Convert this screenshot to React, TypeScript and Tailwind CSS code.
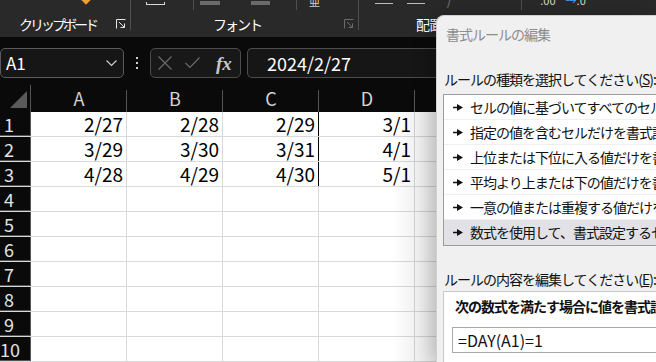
import type { ReactNode } from "react";

const jp = "font-['Noto_Sans_CJK_JP','Noto_Sans',sans-serif]";

const columns = ["A", "B", "C", "D"];

const rows: string[][] = [
  ["2/27", "2/28", "2/29", "3/1"],
  ["3/29", "3/30", "3/31", "4/1"],
  ["4/28", "4/29", "4/30", "5/1"],
];

const ruleTypes = [
  "セルの値に基づいてすべてのセルを書式設定",
  "指定の値を含むセルだけを書式設定",
  "上位または下位に入る値だけを書式設定",
  "平均より上または下の値だけを書式設定",
  "一意の値または重複する値だけを書式設定",
  "数式を使用して、書式設定するセルを決定",
];

function Launcher({ dim = false }: { dim?: boolean }) {
  return (
    <svg
      width="10"
      height="10"
      viewBox="0 0 10 10"
      className={dim ? "text-[#6a6a6a]" : "text-[#e6e6e6]"}
    >
      <path
        d="M0.5 9.5V0.5H9.5M3 3l5.5 5.5M4.5 8.5h4v-4"
        fill="none"
        stroke="currentColor"
        strokeWidth="1"
      />
    </svg>
  );
}

function Separator({ tall = false }: { tall?: boolean }) {
  return <div className={`w-px bg-[#4f4f4f] ${tall ? "h-[30px]" : "h-[10px]"}`} />;
}

function Ribbon() {
  return (
    <div className={`flex h-[37px] shrink-0 bg-[#292929] text-white ${jp}`}>
      {/* clipboard */}
      <div className="flex w-[130px] flex-col">
        <div className="flex h-[13px] items-start pl-[82px]">
          <div className="-mt-[5px] size-[8px] rotate-45 bg-[#f0a030]" />
        </div>
        <div className="flex h-[22px] items-center pl-[19px] pr-[4px]">
          <span className="text-[14px] tracking-[-3px]">クリップボード</span>
          <div className="ml-auto">
            <Launcher />
          </div>
        </div>
      </div>
      <Separator tall />

      {/* font */}
      <div className="flex w-[227px] flex-col">
        <div className="flex h-[13px] items-start">
          <div className="ml-[15px] mt-[2px] flex h-[3px] w-[19px] items-end border-x border-b border-[#d8d8d8]" />
          <div className="ml-[28px]">
            <Separator />
          </div>
          <div className="ml-[6px] mt-[1px] h-[4px] w-[20px] bg-[#6a6a6a]" />
          <div className="ml-[31px] mt-[1px] h-[4px] w-[19px] bg-[#6a6a6a]" />
          <div className="ml-[26px]">
            <Separator />
          </div>
          <div className="ml-[12px] -mt-[4px] text-[11px] leading-none text-[#cfcfcf]">亜</div>
        </div>
        <div className="flex h-[22px] items-center pr-[4px]">
          <span className="ml-[82px] text-[14px] tracking-[-2px]">フォント</span>
          <div className="ml-auto">
            <Launcher dim />
          </div>
        </div>
      </div>
      <Separator tall />

      {/* alignment / number (mostly hidden by the dialog) */}
      <div className="flex flex-1 flex-col">
        <div className="flex h-[13px] items-start">
          <div className="ml-[16px] mt-[3px] h-px w-[18px] bg-[#bdbdbd]" />
          <div className="ml-[14px] mt-[3px] h-px w-[18px] bg-[#bdbdbd]" />
          <div className="ml-[22px] -mt-[4px] text-[11px] leading-none text-[#8a8a8a]">/</div>
          <div className="ml-[70px]">
            <Separator />
          </div>
          <div className="ml-[18px] -mt-[5px] text-[11px] leading-none text-[#d8d8d8]">.00</div>
          <div className="ml-[10px] -mt-[5px] text-[11px] leading-none text-[#d8d8d8]">
            <span className="text-[#4aa0ff]">→</span>.0
          </div>
        </div>
        <div className="flex h-[22px] items-center">
          <span className="ml-[57px] text-[14px] tracking-[-1px]">配置</span>
        </div>
      </div>
    </div>
  );
}

function FormulaBar() {
  return (
    <div className={`flex h-[48px] shrink-0 items-start bg-[#0a0a0a] pt-[11px] ${jp}`}>
      <div className="flex h-[30px] w-[124px] items-center rounded-[5px] border border-[#5a5a5a] bg-[#161616] pl-[5px] pr-[6px]">
        <span className="text-[17px] text-white">A1</span>
        <svg width="11" height="7" viewBox="0 0 11 7" className="ml-auto">
          <path d="M0.5 0.5L5.5 5.5L10.5 0.5" fill="none" stroke="#d0d0d0" strokeWidth="1.2" />
        </svg>
      </div>

      <div className="ml-[12px] flex h-[30px] flex-col items-center justify-center gap-[3px]">
        <div className="size-[2px] bg-[#d0d0d0]" />
        <div className="size-[2px] bg-[#d0d0d0]" />
        <div className="size-[2px] bg-[#d0d0d0]" />
      </div>

      <div className="ml-[12px] flex h-[30px] w-[91px] items-center rounded-[5px] border border-[#4c4c4c] bg-[#181818] pl-[7px]">
        <svg width="14" height="14" viewBox="0 0 14 14">
          <path d="M0.5 0.5L13.5 13.5M13.5 0.5L0.5 13.5" stroke="#6b6b6b" strokeWidth="1.2" />
        </svg>
        <svg width="15" height="12" viewBox="0 0 15 12" className="ml-[13px]">
          <path d="M0.5 6L5 10.5L14.5 0.5" fill="none" stroke="#6b6b6b" strokeWidth="1.2" />
        </svg>
        <span className="ml-[16px] font-['Liberation_Serif',serif] text-[19px] font-bold italic leading-none text-[#c8c8c8]">
          fx
        </span>
      </div>

      <div className="ml-[6px] flex h-[30px] flex-1 items-center rounded-l-[5px] border-y border-l border-[#4c4c4c] bg-[#161616] pl-[19px]">
        <span className="text-[18px] text-white">2024/2/27</span>
      </div>
    </div>
  );
}

function ColumnHeader() {
  return (
    <div className={`flex h-[27px] shrink-0 bg-[#0a0a0a] ${jp}`}>
      <div className="flex w-[31px] items-end border-r border-[#555] pb-[4px] pl-[10px]">
        <svg width="17" height="17" viewBox="0 0 17 17">
          <path d="M17 0V17H0Z" fill="#5a5a5a" />
        </svg>
      </div>
      {columns.map((c) => (
        <div key={c} className="relative flex w-[96px] items-center justify-center">
          <span className="text-[18px] text-[#d4d4d4]">{c}</span>
          <div className="absolute bottom-0 right-0 h-[22px] w-px bg-[#555]" />
        </div>
      ))}
      <div className="flex-1" />
    </div>
  );
}

function Cell({ children, dark = false }: { children?: ReactNode; dark?: boolean }) {
  return (
    <div
      className={`flex w-[96px] items-center justify-end border-r pr-[3px] text-[19px] text-black ${
        dark ? "border-black" : "border-[#d9d9d9]"
      }`}
    >
      {children}
    </div>
  );
}

function Grid() {
  return (
    <div className={`flex flex-1 flex-col bg-white ${jp}`}>
      {Array.from({ length: 10 }, (_, i) => {
        const values = rows[i];
        return (
          <div key={i} className="flex h-[25px] shrink-0 border-b border-[#d9d9d9]">
            <div className="flex w-[31px] items-center border-r border-[#555] bg-[#0a0a0a] pl-[4px] text-[18px] text-[#e2e2e2] [box-shadow:inset_0_-1px_0_#555]">
              <span className={i === 9 ? "-ml-[4px]" : ""}>{i + 1}</span>
            </div>
            {columns.map((c, ci) => (
              <Cell key={c} dark={ci === 2 && i < 3}>
                {values?.[ci]}
              </Cell>
            ))}
            <div className="flex-1" />
          </div>
        );
      })}
    </div>
  );
}

function RuleArrow() {
  return (
    <svg width="10" height="7" viewBox="0 0 10 7" className="shrink-0">
      <path d="M0 2.8h5v1.4H0z M4 0l6 3.5L4 7z" fill="#111" />
    </svg>
  );
}

function Dialog() {
  return (
    <div
      className={`absolute left-[436px] top-[15px] flex h-[347px] w-[220px] flex-col overflow-hidden rounded-tl-[8px] border-l border-t border-[#d0d0d0] bg-[#f0f0f0] text-[#111] shadow-[-6px_0_18px_rgba(0,0,0,0.18)] ${jp}`}
    >
      <div className="flex h-[36px] shrink-0 items-center pl-[9px] text-[14px] tracking-[-1px] text-[#8c8c8c]">
        書式ルールの編集
      </div>

      <div className="mt-[17px] flex h-[20px] shrink-0 items-center whitespace-nowrap pl-[7px] text-[14px] tracking-[-1px]">
        ルールの種類を選択してください(<span className="underline">S</span>):
      </div>

      <div className="ml-[6px] mt-[5px] w-[280px] shrink-0 border border-[#9c9c9c] bg-white">
        {ruleTypes.map((t, i) => (
          <div
            key={t}
            className={`flex h-[25px] items-center gap-[7px] whitespace-nowrap pl-[9px] text-[14px] tracking-[-1px] ${
              i === ruleTypes.length - 1 ? "bg-[#e2e2e6]" : "border-b border-[#efefef]"
            }`}
          >
            <RuleArrow />
            <span>{t}</span>
          </div>
        ))}
      </div>

      <div className="mt-[23px] flex h-[20px] shrink-0 items-center whitespace-nowrap pl-[7px] text-[14px] tracking-[-1px]">
        ルールの内容を編集してください(<span className="underline">E</span>):
      </div>

      <div className="ml-[6px] mt-[2px] flex w-[280px] flex-1 flex-col border-l border-t border-[#c8c8c8] bg-white pl-[11px] pt-[4px]">
        <div className="flex h-[20px] items-center whitespace-nowrap text-[14px] font-bold tracking-[-1px]">
          次の数式を満たす場合に値を書式設定(O):
        </div>
        <div className="-ml-[3px] mt-[11px] flex h-[26px] items-center border border-[#a8a8a8] pl-[5px] text-[16px]">
          =DAY(A1)=1
        </div>
      </div>
    </div>
  );
}

export default function App() {
  return (
    <div className="relative flex h-[362px] w-[656px] flex-col overflow-hidden bg-[#0a0a0a]">
      <Ribbon />
      <FormulaBar />
      <ColumnHeader />
      <Grid />
      <div className="pointer-events-none absolute left-[392px] top-[112px] h-[250px] w-[44px] bg-linear-to-r from-transparent to-black/10" />
      <Dialog />
    </div>
  );
}
